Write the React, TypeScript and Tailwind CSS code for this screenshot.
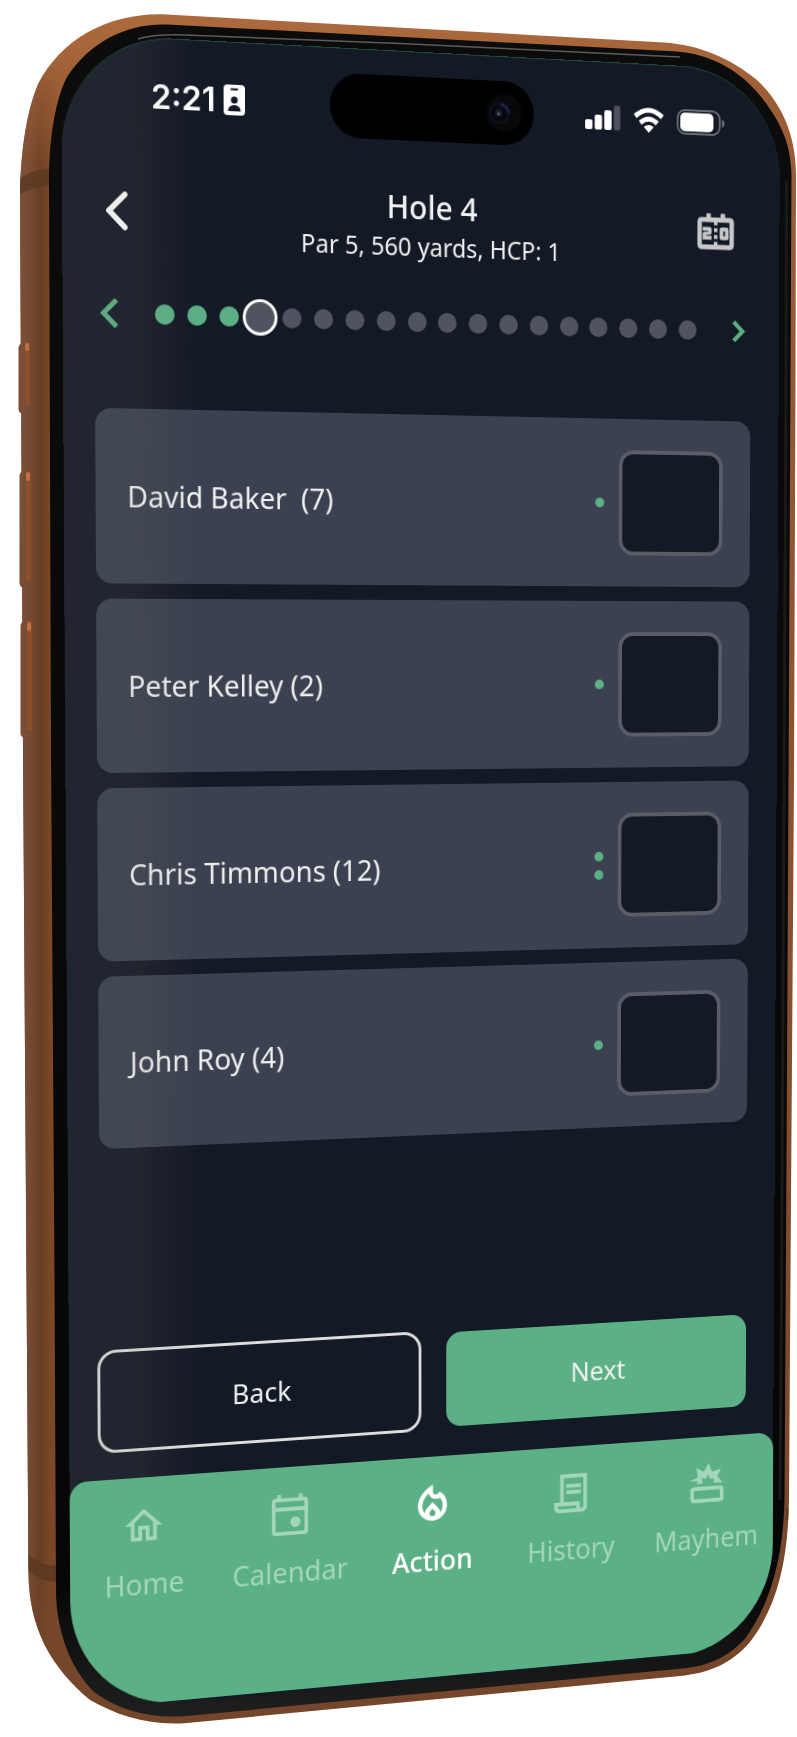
import React from 'react';
import {
  MdOutlineHome,
  MdOutlineLocalFireDepartment,
  MdOutlineScoreboard,
} from 'react-icons/md';

interface Player {
  name: string;
  strokes: number;
}

const HOLES = 18;
const CURRENT_HOLE = 4;

const players: Player[] = [
  { name: 'David Baker  (7)', strokes: 1 },
  { name: 'Peter Kelley (2)', strokes: 1 },
  { name: 'Chris Timmons (12)', strokes: 2 },
  { name: 'John Roy (4)', strokes: 1 },
];

const CalendarIcon = () => (
  <svg viewBox="0 0 24 24" className="size-[46px]" fill="currentColor" aria-hidden="true">
    <path d="M20 3h-1V1h-2v2H7V1H5v2H4c-1.1 0-2 .9-2 2v16c0 1.1.9 2 2 2h16c1.1 0 2-.9 2-2V5c0-1.1-.9-2-2-2zm0 18H4V10h16v11zm0-13H4V5h16v3z" />
    <circle cx="15" cy="16" r="2.8" />
  </svg>
);

const ScrollIcon = () => (
  <svg viewBox="0 0 24 24" className="size-[46px]" fill="none" stroke="currentColor" strokeWidth="2.1" aria-hidden="true">
    <path d="M6.500 18V2.500H20V19.500a2 2 0 0 1-2 2H5a2 2 0 0 1-2-2V17.800h12.800v1.700a2 2 0 0 0 2.200 2" />
    <path d="M9 8h8.500M9 11.300h8.500" />
  </svg>
);

const BlastIcon = () => (
  <svg viewBox="0 0 24 24" className="size-[46px]" fill="none" stroke="currentColor" strokeWidth="2.1" aria-hidden="true">
    <rect x="3.200" y="15" width="17.600" height="6.800" rx="1" />
    <path
      fill="currentColor"
      stroke="none"
      d="M1.700 10.500L6.500 8.700L5.700 3.300L10 5.800L13 1L15 6L20.300 4.500L18.200 8.800L21.300 12.200L15.800 12.200L16.300 9.800L14 10L12.600 7.600L11.300 9.800L8.800 9L9.500 12.300L5.500 12.300L7 10.700Z"
    />
  </svg>
);

const Chevron = ({ flip, className, width = 5 }: { flip?: boolean; className: string; width?: number }) => (
  <svg viewBox="0 0 20 32" className={className} fill="none" stroke="currentColor" strokeWidth={width} aria-hidden="true">
    <path d={flip ? 'M3 3l13 13L3 29' : 'M17 3L4 16l13 13'} />
  </svg>
);

const tabs = [
  { label: 'Home', icon: <MdOutlineHome size={46} /> },
  { label: 'Calendar', icon: <CalendarIcon /> },
  {
    label: 'Action',
    icon: <MdOutlineLocalFireDepartment size={46} strokeWidth={0.5} className="[&_[fill=none]]:stroke-none" />,
    active: true,
  },
  { label: 'History', icon: <ScrollIcon /> },
  { label: 'Mayhem', icon: <BlastIcon /> },
];

const StatusBar = () => (
  <div className="grid h-16 grid-cols-[1fr_auto_1fr] items-center text-white">
    <div className="flex items-center gap-2 pl-[90px]">
      <span className="font-[Inter,sans-serif] text-[33px] leading-10 font-semibold">2:21</span>
      <svg viewBox="0 0 22 30" className="h-[30px] w-[22px]" aria-hidden="true">
        <rect width="22" height="30" rx="4" fill="#fff" />
        <rect x="7" y="3.500" width="8" height="2" rx="1" fill="#141926" />
        <circle cx="11" cy="15" r="3.500" fill="#141926" />
        <path d="M4.500 26c0-4 3-6 6.500-6s6.500 2 6.500 6z" fill="#141926" />
      </svg>
    </div>
    <div className="flex h-16 w-[217px] items-center justify-end rounded-full bg-black pr-3">
      <svg viewBox="0 0 40 40" className="size-10" aria-hidden="true">
        <circle cx="20" cy="20" r="19" fill="#08080a" />
        <circle cx="15" cy="20" r="11.500" fill="#0b0d18" />
        <circle cx="15" cy="20" r="8" fill="#06070d" />
        <path d="M16 11q8 2 9 9" fill="none" stroke="#1c2148" strokeWidth="3" />
        <circle cx="14" cy="20" r="4" fill="#171b28" />
        <circle cx="14" cy="21" r="1.500" fill="#59607a" />
      </svg>
    </div>
    <div className="flex items-center justify-end gap-3.5 pr-[62px]">
      <svg viewBox="0 0 39 26" className="h-[26px] w-[39px]" fill="#fff" aria-hidden="true">
        <rect y="15" width="8" height="10" rx="2" />
        <rect x="10.500" y="10" width="8" height="15" rx="2" />
        <rect x="21" y="5" width="8" height="20" rx="2" />
        <rect x="31.500" width="7" height="25" rx="2" opacity="0.25" />
      </svg>
      <svg viewBox="0 0 34 26" className="h-[26px] w-[34px]" fill="none" stroke="#fff" strokeWidth="5" aria-hidden="true">
        <path d="M2 9.500q15-13 30 0" />
        <path d="M7.500 16q9.500-8 19 0" />
        <path d="M17 26l-5.500-6q5.500-4 11 0z" fill="#fff" stroke="none" />
      </svg>
      <svg viewBox="0 0 54 26" className="h-[26px] w-[54px]" aria-hidden="true">
        <rect x="1" y="1" width="47" height="24" rx="8" fill="none" stroke="#6a6d76" strokeWidth="2" />
        <rect x="4" y="3.500" width="37" height="19" rx="5" fill="#fff" />
        <path d="M50.500 9q3 1 3 4t-3 4z" fill="#6a6d76" />
      </svg>
    </div>
  </div>
);

const HoleDots = () => (
  <div className="flex flex-1 items-center justify-between">
    {Array.from({ length: HOLES }, (_, i) => i + 1).map((hole) => (
      <button
        key={hole}
        aria-label={`Hole ${hole}`}
        className={
          hole === CURRENT_HOLE
            ? '-mx-2 size-9 rounded-full border-[3px] border-white bg-[#51545f]'
            : hole < CURRENT_HOLE
              ? 'size-5 rounded-full bg-[#5cb085]'
              : 'size-5 rounded-full bg-[#51545f]'
        }
      />
    ))}
  </div>
);

const PlayerCard = ({ player }: { player: Player }) => (
  <li className="flex h-[172px] items-center rounded-2xl bg-[#3b4150] pr-[31px] pl-8">
    <label htmlFor={player.name} className="flex-1 text-[29px] leading-10 whitespace-pre">
      {player.name}
    </label>
    <div className="mr-4 flex flex-col gap-[9px]">
      {Array.from({ length: player.strokes }, (_, i) => (
        <span key={i} className="size-2.5 rounded-full bg-[#5cb085]" />
      ))}
    </div>
    <input
      id={player.name}
      type="text"
      inputMode="numeric"
      className="h-[108px] w-[116px] rounded-2xl border-4 border-[#5a5d67] bg-[#141926] text-center text-4xl"
    />
  </li>
);

const Screen = () => (
  <div className="relative flex h-full flex-col overflow-hidden rounded-[112px] border-t border-[#1f4a3c] bg-[#141926] pt-6 font-['Noto_Sans',sans-serif] text-[#f0f0f0]">
    <div className="pointer-events-none absolute inset-y-0 left-0 z-10 w-[136px] bg-linear-to-r from-[#7a7a6a1f] from-50% to-transparent" />
    <StatusBar />

    <header className="mt-10 flex items-center px-11 text-white">
      <div className="flex w-24">
        <button aria-label="Back">
          <svg viewBox="0 0 22 38" className="h-[38px] w-[22px]" fill="none" stroke="currentColor" strokeWidth="5.500" strokeLinecap="round" aria-hidden="true">
            <path d="M19 3L3 19l16 16" />
          </svg>
        </button>
      </div>
      <div className="flex-1 pt-1 text-center text-[#f0f0f0]">
        <h1 className="text-[32px] leading-[44px] font-medium">Hole 4</h1>
        <p className="text-[25px] leading-[34px]">Par 5, 560 yards, HCP: 1</p>
      </div>
      <button aria-label="Scorecard" className="flex w-24 justify-end pr-1 text-[#c8c8ca]">
        <MdOutlineScoreboard size={48} strokeWidth={0.5} className="[&_[fill=none]]:stroke-none" />
      </button>
    </header>

    <div className="mt-[39px] flex h-10 items-center pr-[38px] pl-[37px] text-[#5cb085]">
      <button aria-label="Previous hole" className="w-14">
        <Chevron className="h-8 w-5" />
      </button>
      <HoleDots />
      <button aria-label="Next hole" className="flex w-[55px] justify-end">
        <Chevron flip className="h-6 w-4" width={6} />
      </button>
    </div>

    <ul className="mt-[73px] flex flex-col gap-[15px] px-8">
      {players.map((player) => (
        <PlayerCard key={player.name} player={player} />
      ))}
    </ul>

    <div className="mt-auto mb-[30px] flex gap-[30px] px-8 text-[28px]">
      <button className="h-[98px] flex-1 rounded-2xl outline-[3px] outline-[#dcdcdc]">Back</button>
      <button className="h-[98px] flex-1 rounded-2xl bg-[#5cb085]">Next</button>
    </div>

    <nav className="z-20 mb-0.5 grid h-[230px] grid-cols-5 items-start rounded-t-[18px] bg-[#5cb085] pt-[26px] text-[29px] leading-9">
      {tabs.map(({ label, icon, active }) => (
        <a
          key={label}
          href={`#${label.toLowerCase()}`}
          className={`flex flex-col items-center gap-[18px] ${active ? 'font-medium text-white' : 'text-[#a4d6bc]'}`}
        >
          {icon}
          {label}
        </a>
      ))}
    </nav>
  </div>
);

const PhoneBody = () => (
  <svg viewBox="0 0 797 1737" className="h-[1737px] w-[797px]" aria-hidden="true">
    <defs>
      <linearGradient id="metal" x1="0" y1="0" x2="0" y2="1">
        <stop offset="0" stopColor="#b06c3f" />
        <stop offset="0.06" stopColor="#9b5d36" />
        <stop offset="0.5" stopColor="#8a5231" />
        <stop offset="1" stopColor="#73452a" />
      </linearGradient>
      <linearGradient id="side" gradientUnits="userSpaceOnUse" x1="20" y1="0" x2="64" y2="0">
        <stop offset="0" stopColor="#7c5038" />
        <stop offset="0.28" stopColor="#724830" />
        <stop offset="0.45" stopColor="#653e24" />
        <stop offset="0.68" stopColor="#7a4726" />
        <stop offset="1" stopColor="#7a4726" stopOpacity="0" />
      </linearGradient>
      <linearGradient id="fade" x1="0" y1="0" x2="0" y2="1">
        <stop offset="0" stopColor="#000" />
        <stop offset="0.08" stopColor="#fff" />
        <stop offset="0.92" stopColor="#fff" />
        <stop offset="1" stopColor="#000" />
      </linearGradient>
      <mask id="sideFade">
        <rect y="60" width="70" height="1620" fill="url(#fade)" />
      </mask>
      <linearGradient id="glass" x1="0" y1="0" x2="0" y2="1">
        <stop offset="0" stopColor="#0c0c0c" />
        <stop offset="0.92" stopColor="#060606" />
        <stop offset="1" stopColor="#1f1f1f" />
      </linearGradient>
      <clipPath id="shell">
        <path d="M167 14.500L664 42.500C700 45 730 58 757 80C785 106 796 140 796 175L795.500 380L794 780L791 1200L789 1500C788 1560 778 1605 750 1642C730 1665 708 1673 680 1676L187 1723C150 1726 118 1716 90 1700C52 1668 29 1630 28.500 1573L26.500 1280L23 750L20 200C20 160 25 115 38 84C62 38 110 12 167 14.500Z" />
      </clipPath>
    </defs>
    <g fill="#7c4c30">
      <rect x="18.500" y="343" width="11" height="71" rx="5" />
      <rect x="19.500" y="471" width="11" height="117" rx="5" />
      <rect x="20.500" y="621" width="11" height="117" rx="5" />
    </g>
    <g clipPath="url(#shell)">
      <rect width="797" height="1737" fill="url(#metal)" />
      <rect y="60" width="64" height="1620" fill="url(#side)" mask="url(#sideFade)" />
      <path d="M18 180Q32 169 50 169V186Q34 186 18 195zM26 1552Q38 1566 58 1566V1582Q38 1582 26 1568z" fill="#5a3820" opacity="0.8" />
      <path d="M785 1508h6v12h-6z" fill="#5a3820" opacity="0.6" />
    </g>
    <g fill="#8a5029">
      <rect x="25" y="342" width="5" height="64" rx="2" />
      <rect x="26" y="471" width="5" height="110" rx="2" />
      <rect x="27" y="621" width="5" height="110" rx="2" />
    </g>
    <g fill="#c0713f">
      <rect x="25" y="343" width="4" height="8" rx="2" />
      <rect x="26" y="472" width="4" height="9" rx="2" />
      <rect x="27" y="622" width="4" height="9" rx="2" />
    </g>
    <path
      fill="url(#glass)"
      d="M167 24.500L677 51.500C712 54 742 72 762 98C782 124 791 145 791.500 175L790.500 380L788.500 780L786.500 1160L784.500 1500C783 1560 770 1605 744 1640C724 1660 705 1667 677 1669L187 1716C150 1719 118 1710 94 1692C70 1668 56 1630 56 1590L54.500 1280L51 750L49 180C49 140 55 100 67 77C88 44 125 23 167 24.500Z"
    />
    <path d="M138 39Q155 34 185 35L400 43.500L680 57" fill="none" stroke="#5c5c5c" strokeWidth="1.500" />
    <path d="M786.500 180L786 380L784 780L781.500 1300L780 1500" fill="none" stroke="#1a1a1a" strokeWidth="3" />
  </svg>
);

export default function App() {
  return (
    <main className="min-h-screen overflow-x-hidden bg-white">
      <div className="relative mx-auto w-[797px]">
        <PhoneBody />
        {/* the app is laid out flat and tilted onto the glass as a whole */}
        <div className="absolute top-0 left-0 h-[1661px] w-[764px] origin-top-left [transform:matrix3d(1.00911,0.056545,0,0.00008683,0.00702,1.03829,0,0.000015828,0,0,1,0,61.1,32.6,0,1)]">
          <Screen />
        </div>
      </div>
    </main>
  );
}
